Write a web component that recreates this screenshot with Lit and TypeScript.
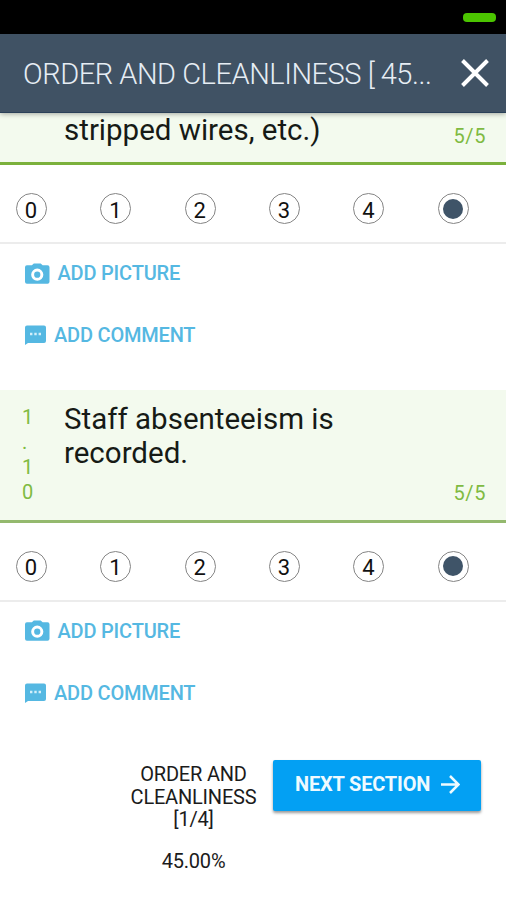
import { LitElement, html, css, svg } from "lit";
import { customElement, property } from "lit/decorators.js";

const cameraIcon = svg`<path fill="currentColor" fill-rule="evenodd" d="M2 2H7L9 .3H16L18 2H23Q25 2 25 4V19Q25 21 23 21H2Q0 21 0 19V4Q0 2 2 2ZM12.500 5.500A6.200 6.200 0 1 0 12.500 17.900A6.200 6.200 0 1 0 12.500 5.500ZM12.500 8.500A3.200 3.200 0 1 1 12.500 14.900A3.200 3.200 0 1 1 12.500 8.500Z"/>`;
const commentIcon = svg`<path fill="currentColor" d="M2 .5H19Q21 .5 21 2.500V16Q21 18 19 18H3L0 20V2.500Q0 .5 2 .5Z"/><path fill="#d4effa" d="M5 7.800h2.400v2.400H5zM9.300 7.800h2.400v2.400H9.300zM13.600 7.800H16v2.400h-2.400z"/>`;

@customElement("audit-question")
class AuditQuestion extends LitElement {
  @property() number = "";
  @property() text = "";
  @property({ type: Number }) score = 5;

  static styles = css`
    :host { display: block; flex: none; height: 357.500px; color: #161a16; }
    :host([continued]) { height: 277px; }
    .prompt {
      box-sizing: border-box; height: 132.500px; display: flex;
      padding: 12px 20px 0 22px; background: #f3faee;
      border-bottom: 3px solid #94b96e; color: #7fba42;
    }
    :host([continued]) .prompt { height: 52px; padding-top: 0; border-bottom-color: #7bb13c; }
    .number { width: 12px; margin-right: 30px; font-size: 20px; line-height: 25.300px; white-space: pre-line; padding-top: 2.600px; }
    .text { width: 330px; font-size: 29.500px; line-height: 34px; color: #161a16; white-space: pre-line; }
    .score { margin: 78px 0 0 auto; font-size: 20px; line-height: 26px; letter-spacing: .6px; }
    :host([continued]) .score { margin-top: 10px; }
    .scale { box-sizing: border-box; height: 79px; display: grid; grid-template-columns: repeat(6, 1fr); padding-top: 28px; border-bottom: 2px solid #ececec; }
    .option {
      box-sizing: border-box; width: 31px; height: 31px; margin-left: 16px;
      border: 1.500px solid #858585; border-radius: 50%; display: flex;
      align-items: center; justify-content: center; font-size: 22px; line-height: 31px; padding: 3px 1px 0 0; color: #111;
    }
    .selected { padding: 0; }
    .dot { width: 20px; height: 20px; border-radius: 50%; background: #3f5468; }
    .actions { margin-top: -1.500px; }
    .action { display: flex; align-items: center; height: 61.700px; padding-left: 25px; color: #55b8e2; font-size: 20px; font-weight: 500; letter-spacing: -.2px; }
    .camera { width: 24.500px; height: 21px; margin-right: 8px; }
    .comment { width: 21px; height: 20px; margin-right: 8px; }
  `;

  render() {
    return html`
      <div class="prompt">
        <div class="number">${this.number}</div>
        <div class="text">${this.text}</div>
        <div class="score">${this.score}/5</div>
      </div>
      <div class="scale">
        ${[0, 1, 2, 3, 4, 5].map((n) => n === this.score
          ? html`<div class="option selected"><span class="dot"></span></div>`
          : html`<div class="option">${n}</div>`)}
      </div>
      <div class="actions">
        <div class="action"><svg class="camera" viewBox="0 0 25 21">${cameraIcon}</svg><span>ADD PICTURE</span></div>
        <div class="action"><svg class="comment" viewBox="0 0 21 20">${commentIcon}</svg><span>ADD COMMENT</span></div>
      </div>
    `;
  }
}

@customElement("app-root")
class AppRoot extends LitElement {
  static styles = css`
    :host { display: flex; flex-direction: column; height: 900px; overflow: hidden; background: #fff; font-family: Roboto, "Liberation Sans", sans-serif; }
    .status { height: 34px; flex: none; background: #000; display: flex; justify-content: flex-end; align-items: flex-start; box-sizing: border-box; padding: 13px 10px 0; }
    .battery { width: 33px; height: 9px; border-radius: 4px; background: #4bc400; }
    .header { height: 79px; flex: none; box-sizing: border-box; display: flex; align-items: center; padding: 0 17px 0 23px; background: #405264; border-bottom: 1px solid #2a4058; box-shadow: 0 1px 5px #0005; z-index: 1; color: #e6edf4; }
    .title { flex: 1; padding-top: 1px; font-size: 29px; font-weight: 300; letter-spacing: -.46px; white-space: nowrap; }
    .close { width: 28px; height: 28px; flex: none; }
    .content { flex: none; height: 634.500px; display: flex; flex-direction: column; }
    .footer { height: 152.500px; flex: none; box-sizing: border-box; display: flex; align-items: flex-start; padding: 12px 25px 0 130px; color: #1b1b1b; }
    .progress { width: 127px; margin-right: 16px; padding-top: 3.500px; font-size: 20px; line-height: 22.500px; letter-spacing: -.2px; text-align: center; }
    .percent { margin-top: 19.500px; }
    .next { box-sizing: border-box; width: 208px; height: 51px; display: flex; align-items: center; padding: 0 0 2px 22px; background: #03a0f3; border-radius: 2px; box-shadow: 0 2px 3px #0006; color: #eefaff; font-size: 20px; font-weight: 700; letter-spacing: -.18px; white-space: nowrap; }
    .arrow { width: 19px; height: 19px; margin: 1px 0 0 11px; }
  `;

  render() {
    return html`
      <div class="status"><div class="battery"></div></div>
      <div class="header">
        <div class="title">ORDER AND CLEANLINESS [ 45...</div>
        <svg class="close" viewBox="0 0 28 28"><path d="M1.500 1.500L26.500 26.500M26.500 1.500L1.500 26.500" stroke="#fff" stroke-width="3.900"/></svg>
      </div>
      <div class="content">
        <audit-question continued .text=${"stripped wires, etc.)"}></audit-question>
        <audit-question .number=${"1\n.\n1\n0"} .text=${"Staff absenteeism is\nrecorded."}></audit-question>
      </div>
      <div class="footer">
        <div class="progress">
          <div>ORDER AND<br />CLEANLINESS<br />[1/4]</div>
          <div class="percent">45.00%</div>
        </div>
        <div class="next"><span>NEXT SECTION</span>
          <svg class="arrow" viewBox="0 0 19 19"><path d="M0 9.500H17M9 1L17.500 9.500L9 18" fill="none" stroke="currentColor" stroke-width="2.500"/></svg>
        </div>
      </div>
    `;
  }
}
